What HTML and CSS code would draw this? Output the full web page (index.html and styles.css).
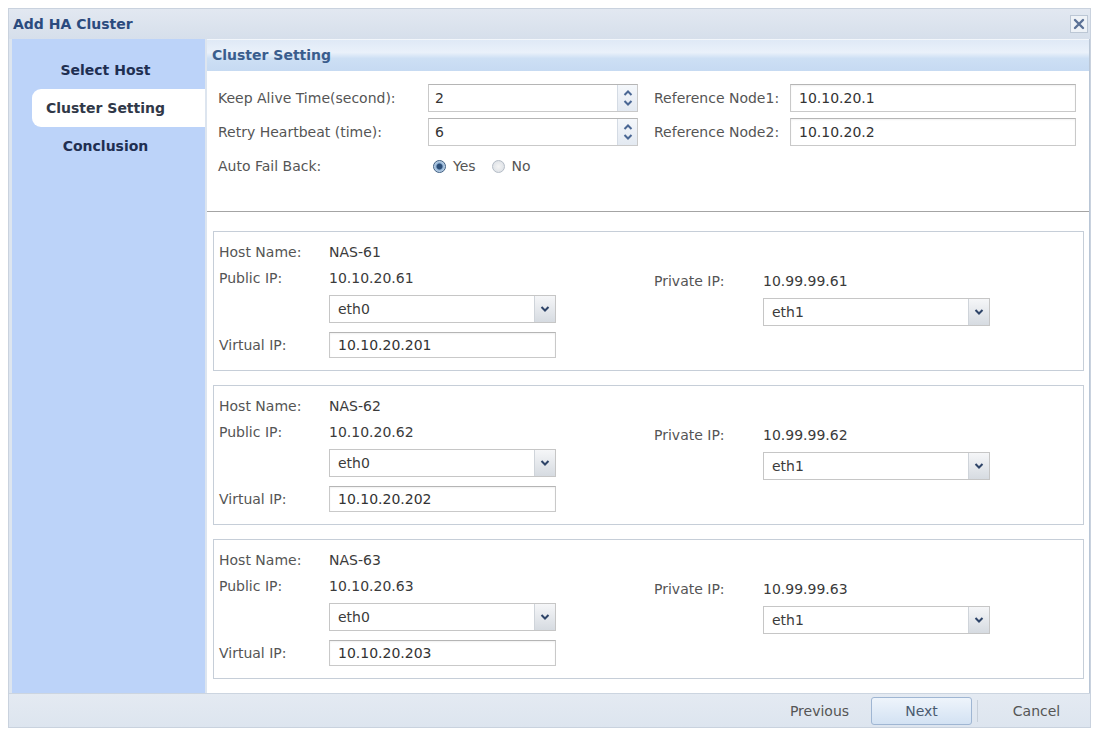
FILE: index.html
```html
<!DOCTYPE html>
<html lang="en">
  <head>
    <meta charset="UTF-8" />
    <title>Add HA Cluster</title>
    <link rel="stylesheet" href="styles.css">
  </head>
  <body>
    <div class="window">
      <!-- title bar -->
      <div class="titlebar">
        <span class="title">Add HA Cluster</span>
        <span class="close">
          <svg width="12" height="12" viewBox="0 0 12 12">
            <path d="M2 2 L10 10 M10 2 L2 10" stroke="#5b7196" stroke-width="2.4" stroke-linecap="round" />
          </svg>
        </span>
      </div>

      <div class="body">
        <div class="sidebar">
          <div class="step">Select Host</div>
          <div class="step active">Cluster Setting</div>
          <div class="step">Conclusion</div>
        </div>

        <div class="main">
          <div class="panel-head">Cluster Setting</div>

          <!-- general settings -->
          <div class="settings">
            <label class="lbl">Keep Alive Time(second):</label>
            <div class="spin">
              <input type="text" value="2" />
              <span class="spin-btn">
                <svg width="12" height="20" viewBox="0 0 12 20"><path d="M2.5 7 L6 3.5 L9.5 7 M2.5 13 L6 16.5 L9.5 13" fill="none" stroke="#4a6794" stroke-width="2" /></svg>
              </span>
            </div>
            <label class="lbl ref">Reference Node1:</label>
            <input class="field" type="text" value="10.10.20.1" />

            <label class="lbl">Retry Heartbeat (time):</label>
            <div class="spin">
              <input type="text" value="6" />
              <span class="spin-btn">
                <svg width="12" height="20" viewBox="0 0 12 20"><path d="M2.5 7 L6 3.5 L9.5 7 M2.5 13 L6 16.5 L9.5 13" fill="none" stroke="#4a6794" stroke-width="2" /></svg>
              </span>
            </div>
            <label class="lbl ref">Reference Node2:</label>
            <input class="field" type="text" value="10.10.20.2" />

            <label class="lbl">Auto Fail Back:</label>
            <div class="radios">
              <span class="radio checked"></span><span class="radio-text">Yes</span>
              <span class="radio"></span><span class="radio-text">No</span>
            </div>
          </div>

          <!-- hosts -->
          <div class="hosts">
            <div class="host">
              <span class="lbl">Host Name:</span>
              <span class="val">NAS-61</span>
              <span class="lbl r2">Public IP:</span>
              <span class="val r2">10.10.20.61</span>
              <span class="lbl r2 c4 shift">Private IP:</span>
              <span class="val r2 c5 shift">10.99.99.61</span>
              <div class="select r3 c2"><span>eth0</span><span class="arrow"><svg width="10" height="8" viewBox="0 0 10 8"><path d="M1.5 2 L5 5.5 L8.5 2" fill="none" stroke="#2e4468" stroke-width="2" /></svg></span></div>
              <div class="select r3 c5 shift"><span>eth1</span><span class="arrow"><svg width="10" height="8" viewBox="0 0 10 8"><path d="M1.5 2 L5 5.5 L8.5 2" fill="none" stroke="#2e4468" stroke-width="2" /></svg></span></div>
              <span class="lbl r4">Virtual IP:</span>
              <input class="field r4 c2" type="text" value="10.10.20.201" />
            </div>

            <div class="host">
              <span class="lbl">Host Name:</span>
              <span class="val">NAS-62</span>
              <span class="lbl r2">Public IP:</span>
              <span class="val r2">10.10.20.62</span>
              <span class="lbl r2 c4 shift">Private IP:</span>
              <span class="val r2 c5 shift">10.99.99.62</span>
              <div class="select r3 c2"><span>eth0</span><span class="arrow"><svg width="10" height="8" viewBox="0 0 10 8"><path d="M1.5 2 L5 5.5 L8.5 2" fill="none" stroke="#2e4468" stroke-width="2" /></svg></span></div>
              <div class="select r3 c5 shift"><span>eth1</span><span class="arrow"><svg width="10" height="8" viewBox="0 0 10 8"><path d="M1.5 2 L5 5.5 L8.5 2" fill="none" stroke="#2e4468" stroke-width="2" /></svg></span></div>
              <span class="lbl r4">Virtual IP:</span>
              <input class="field r4 c2" type="text" value="10.10.20.202" />
            </div>

            <div class="host">
              <span class="lbl">Host Name:</span>
              <span class="val">NAS-63</span>
              <span class="lbl r2">Public IP:</span>
              <span class="val r2">10.10.20.63</span>
              <span class="lbl r2 c4 shift">Private IP:</span>
              <span class="val r2 c5 shift">10.99.99.63</span>
              <div class="select r3 c2"><span>eth0</span><span class="arrow"><svg width="10" height="8" viewBox="0 0 10 8"><path d="M1.5 2 L5 5.5 L8.5 2" fill="none" stroke="#2e4468" stroke-width="2" /></svg></span></div>
              <div class="select r3 c5 shift"><span>eth1</span><span class="arrow"><svg width="10" height="8" viewBox="0 0 10 8"><path d="M1.5 2 L5 5.5 L8.5 2" fill="none" stroke="#2e4468" stroke-width="2" /></svg></span></div>
              <span class="lbl r4">Virtual IP:</span>
              <input class="field r4 c2" type="text" value="10.10.20.203" />
            </div>
          </div>
        </div>
      </div>

      <!-- footer buttons -->
      <div class="footer">
        <button class="btn">Previous</button>
        <button class="btn primary">Next</button>
        <span class="sep"></span>
        <button class="btn">Cancel</button>
      </div>
    </div>
  </body>
</html>
```

FILE: styles.css
```css
/* Reset */
* {
  margin: 0;
  padding: 0;
  box-sizing: border-box;
  font-family: "DejaVu Sans", Verdana, sans-serif;
}

body {
  background-color: #ffffff;
  color: #333;
  font-size: 14px;
}

.window {
  margin: 8px 0 0 8px;
  width: 1083px;
  height: 720px;
  background-color: #dde5ef;
  border: 1px solid #c9d2de;
  display: flex;
  flex-direction: column;
}

/* title bar */
.titlebar {
  height: 32px;
  display: flex;
  align-items: center;
  justify-content: space-between;
  padding: 0 2px 0 4px;
  background: linear-gradient(#e2e8f1, #d6dfeb);
}

.title {
  font-weight: bold;
  color: #2b4b7e;
  font-size: 14px;
}

.close {
  width: 18px;
  height: 18px;
  display: flex;
  align-items: center;
  justify-content: center;
  background-color: #eef2f7;
  border: 1px solid #bcc7d5;
}

.body {
  flex: 1;
  display: flex;
  padding-left: 3px;
}

/* sidebar steps */
.sidebar {
  width: 193px;
  background-color: #bcd3f9;
  padding-top: 12px;
  margin-right: 2px;
}

.step {
  margin-left: 20px;
  height: 38px;
  line-height: 38px;
  padding-right: 26px;
  text-align: center;
  font-weight: bold;
  color: #1f2f52;
  white-space: nowrap;
}

.step.active {
  background-color: #ffffff;
  border-radius: 9px 0 0 9px;
  color: #303848;
}

/* main panel */
.main {
  flex: 1;
  background-color: #ffffff;
  border-right: 1px solid #b9c6d6;
  display: flex;
  flex-direction: column;
}

.panel-head {
  height: 32px;
  padding: 0 5px;
  line-height: 30px;
  font-weight: bold;
  color: #3a5d8d;
  background: linear-gradient(#dfe9f6 0%, #eaf1fa 40%, #cddff4 60%, #c6daf2 100%);
  border-top: 1px solid #f2f6fb;
}

.settings {
  height: 141px;
  padding: 13px 0 0 11px;
  border-bottom: 1px solid #a4a4a4;
  display: grid;
  grid-template-columns: 210px 210px 152px 286px;
  grid-template-rows: 28px 28px 28px;
  row-gap: 6px;
}

.lbl {
  color: #555;
  display: flex;
  align-items: center;
  white-space: nowrap;
}

.settings .ref {
  padding-left: 16px;
}

input {
  font-size: 14px;
  color: #333;
  outline: none;
}

.field {
  height: 28px;
  border: 1px solid #c9c9c9;
  border-top-color: #b5b5b5;
  padding: 0 8px;
  background-color: #fff;
  box-shadow: inset 0 1px 2px rgba(0, 0, 0, 0.06);
}

.spin {
  display: flex;
  border: 1px solid #c9c9c9;
  border-top-color: #b5b5b5;
  height: 28px;
}

.spin input {
  flex: 1;
  min-width: 0;
  border: none;
  padding: 0 6px;
}

.spin-btn {
  width: 20px;
  display: flex;
  align-items: center;
  justify-content: center;
  background: linear-gradient(#f4f7fb, #e3e9f1);
  border-left: 1px solid #d4dbe4;
}

.radios {
  display: flex;
  align-items: center;
  padding-left: 5px;
}

.radio {
  width: 13px;
  height: 13px;
  border-radius: 50%;
  border: 1px solid #b4bcc6;
  background: radial-gradient(#f4f4f4, #d8dde3);
}

.radio.checked {
  border-color: #3b5d82;
  background: radial-gradient(circle, #2c4e78 0, #2c4e78 2.5px, #8fb2d6 3.5px, #cfdcea 6px);
}

.radio-text {
  color: #555;
  margin: 0 16px 0 7px;
}

/* host boxes */
.hosts {
  padding: 19px 5px 0 6px;
}

.host {
  height: 140px;
  margin-bottom: 14px;
  border: 1px solid #c6ced8;
  padding: 7px 0 0 5px;
  display: grid;
  grid-template-columns: 110px 227px 98px 109px 227px;
  grid-template-rows: 26px 29px 32px 32px;
}

.host .lbl,
.host .val {
  display: block;
  line-height: 26px;
}

.host .val {
  color: #3b3b3b;
}

.r2 { grid-row: 2; }
.r3 { grid-row: 3; }
.r4 { grid-row: 4; }
.c2 { grid-column: 2; }
.c4 { grid-column: 4; }
.c5 { grid-column: 5; }

.host .shift {
  margin-top: 3px;
}

.host .lbl.r4 {
  align-self: end;
}

.host .field {
  height: 26px;
  align-self: end;
}

.select {
  height: 28px;
  margin-top: 1px;
  border: 1px solid #c6c6c6;
  display: flex;
  justify-content: space-between;
  align-items: center;
  padding-left: 8px;
  color: #3b3b3b;
}

.host .select.shift {
  margin-top: 4px;
}

.arrow {
  width: 21px;
  height: 100%;
  display: flex;
  align-items: center;
  justify-content: center;
  background: linear-gradient(#f5f6f8, #d6dbe1);
  border-left: 1px solid #cfd4da;
}

/* footer */
.footer {
  height: 36px;
  display: flex;
  align-items: center;
  justify-content: flex-end;
  padding-right: 3px;
  background: linear-gradient(#e4eaf2, #dde5ef);
  border-top: 1px solid #ccd5e0;
}

.btn {
  width: 101px;
  height: 28px;
  border: 1px solid transparent;
  background: none;
  font-size: 14px;
  color: #555;
  border-radius: 3px;
}

.btn.primary {
  border-color: #9fb6d3;
  background: linear-gradient(#eef4fb, #d3e2f3);
  color: #4a5a70;
  margin-left: 1px;
}

.sep {
  width: 1px;
  height: 22px;
  background-color: #c6cfda;
  margin: 0 8px 0 5px;
}
```
